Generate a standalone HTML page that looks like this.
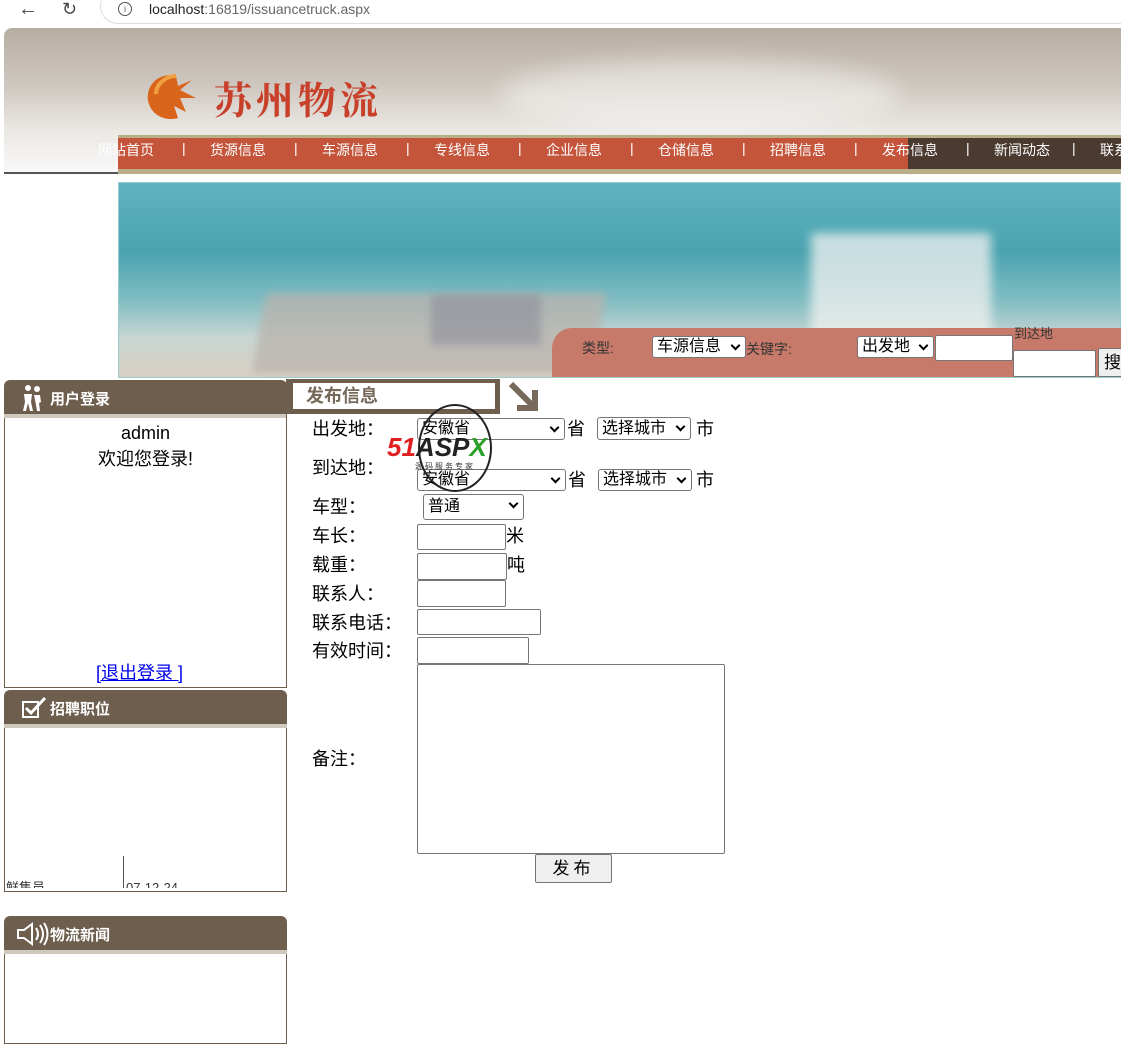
<!DOCTYPE html>
<html><head><meta charset="utf-8">
<style>
*{margin:0;padding:0;box-sizing:border-box}
body{width:1121px;height:1032px;overflow:hidden;background:#fff;position:relative;font-family:"Liberation Sans","Noto Sans CJK SC",sans-serif;color:#000}
.a{position:absolute}
.nav span{position:absolute;top:2px;color:#fff;font-size:14px;white-space:nowrap}
.lbl{position:absolute;left:312px;font-size:18px;line-height:20px;white-space:nowrap}
.box{position:absolute;border:1px solid #767676;border-radius:2px;background:#fff}
.sel{position:absolute;border:1px solid #767676;border-radius:3px;background:#fff;font-size:16px;line-height:18px;padding-left:4px;white-space:nowrap}
.sel:after{content:"";position:absolute;right:6px;top:5px;width:5px;height:5px;border-right:2px solid #000;border-bottom:2px solid #000;transform:rotate(45deg)}
.u{position:absolute;font-size:18px;line-height:20px}
.ph{position:absolute;left:4px;width:283px;height:38px;background:#6e5e4e;border-radius:6px 6px 0 0;border-bottom:4px solid #cfc8bd}
.ph b{position:absolute;left:46px;top:8px;color:#fff;font-size:15px}
.pb{position:absolute;left:4px;width:283px;border:1px solid #6e5e4e;border-top:none;background:#fff}
</style></head><body>
<div class="a" style="left:0;top:0;width:1121px;height:28px;background:#fff"></div>
<div class="a" style="left:18px;top:0;font-size:20px;line-height:18px;color:#444">&#8592;</div>
<div class="a" style="left:62px;top:0;font-size:18px;line-height:18px;color:#444">&#8635;</div>
<div class="a" style="left:100px;top:-12px;width:1100px;height:36px;border:1px solid #ddd;border-radius:18px"></div>
<div class="a" style="left:118px;top:2px;width:14px;height:14px;border:1px solid #555;border-radius:50%;font-size:9px;text-align:center;line-height:12px;color:#555">i</div>
<div class="a" style="left:149px;top:1px;font-size:14px;line-height:16px;color:#222">localhost<span style="color:#666">:16819/issuancetruck.aspx</span></div>
<div class="a" style="left:4px;top:28px;width:1117px;height:147px;border-radius:8px 0 0 0;background:linear-gradient(#b6aca2 0%,#cfc8c0 40%,#ebe8e4 70%,#fafafa 100%)"></div>
<div class="a" style="left:500px;top:60px;width:400px;height:70px;border-radius:50%;background:rgba(255,255,255,.45);filter:blur(12px)"></div>
<svg class="a" style="left:146px;top:68px" width="60" height="55" viewBox="0 0 60 55"><path d="M30 8 C12 4 0 18 2 32 C4 46 18 54 32 50 L28 38 L40 44 L34 30 L50 30 L34 22 L46 12 L32 18 Z" fill="#d9651c"/><path d="M30 8 C20 8 10 16 10 26" stroke="#f0a040" stroke-width="4" fill="none"/></svg>
<div class="a" style="left:214px;top:76px;font-size:38px;line-height:44px;color:#c8402a;font-weight:bold;font-family:'Noto Serif CJK SC',serif;letter-spacing:4px">苏州物流</div>
<div class="a" style="left:4px;top:172px;width:114px;height:2px;background:#555"></div>
<div class="a" style="left:118px;top:135px;width:1003px;height:39px;background:#b8ae88"></div>
<div class="a" style="left:118px;top:138px;width:790px;height:31px;background:#c4543a"></div>
<div class="a" style="left:908px;top:138px;width:213px;height:31px;background:#4a3a30"></div>
<div class="a nav" style="left:0;top:138px;width:1121px;height:31px">
<span style="left:98px">网站首页</span><span style="left:182px">|</span>
<span style="left:210px">货源信息</span><span style="left:294px">|</span>
<span style="left:322px">车源信息</span><span style="left:406px">|</span>
<span style="left:434px">专线信息</span><span style="left:518px">|</span>
<span style="left:546px">企业信息</span><span style="left:630px">|</span>
<span style="left:658px">仓储信息</span><span style="left:742px">|</span>
<span style="left:770px">招聘信息</span><span style="left:854px">|</span>
<span style="left:882px">发布信息</span><span style="left:966px">|</span>
<span style="left:994px">新闻动态</span><span style="left:1072px">|</span>
<span style="left:1100px">联系</span></div>
<div class="a" style="left:118px;top:182px;width:1003px;height:196px;background:linear-gradient(#5fb3bf 0%,#4aa3b0 35%,#7fbcc2 60%,#c9d6d2 80%,#d8cfc4 100%);border:1px solid #9cc;overflow:hidden">
<div class="a" style="left:140px;top:110px;width:340px;height:80px;background:#b9b3ad;transform:skewX(-10deg);opacity:.75;filter:blur(4px)"></div>
<div class="a" style="left:312px;top:112px;width:110px;height:50px;background:#8e8e9a;opacity:.6;filter:blur(4px)"></div>
<div class="a" style="left:692px;top:50px;width:180px;height:120px;background:#f2f2f0;opacity:.75;filter:blur(5px)"></div>
</div>
<div class="a" style="left:552px;top:328px;width:569px;height:49px;background:#c87a6a;border-radius:20px 0 0 0"></div>
<div class="a" style="left:582px;top:338px;font-size:14px;color:#333">类型:</div>
<div class="sel" style="left:652px;top:336px;width:94px;height:22px;line-height:20px">车源信息</div>
<div class="a" style="left:746px;top:339px;font-size:14px;color:#333">关键字:</div>
<div class="sel" style="left:857px;top:336px;width:77px;height:22px;line-height:20px">出发地</div>
<div class="box" style="left:935px;top:335px;width:78px;height:26px"></div>
<div class="a" style="left:1014px;top:323px;font-size:13px;color:#333">到达地</div>
<div class="box" style="left:1013px;top:350px;width:83px;height:27px"></div>
<div class="box" style="left:1098px;top:348px;width:30px;height:29px;background:#efefef;font-size:17px;padding-left:5px;line-height:27px">搜</div>
<div class="ph" style="top:380px"><b>用户登录</b>
<svg class="a" style="left:16px;top:4px" width="26" height="28"><circle cx="8" cy="4" r="3" fill="#fff"/><circle cx="17" cy="5" r="3" fill="#fff"/><path d="M4 10h8l-1 8 2 9h-3l-2-8-2 8H3l2-9zM14 11h6l1 7-2 1 1 8h-3l-1-6" fill="#fff"/></svg></div>
<div class="pb" style="top:418px;height:270px"></div>
<div class="a" style="left:4px;top:423px;width:283px;text-align:center;font-size:18px;line-height:20px">admin</div>
<div class="a" style="left:4px;top:449px;width:283px;text-align:center;font-size:18px;line-height:20px">欢迎您登录!</div>
<div class="a" style="left:4px;top:663px;width:271px;text-align:center;font-size:18px;line-height:20px;color:#00e;text-decoration:underline">[退出登录 ]</div>
<div class="ph" style="top:690px"><b>招聘职位</b>
<svg class="a" style="left:17px;top:6px" width="28" height="24"><rect x="2" y="6" width="15" height="15" fill="none" stroke="#fff" stroke-width="2"/><path d="M5 12l5 5L24 2" stroke="#fff" stroke-width="3" fill="none"/></svg></div>
<div class="pb" style="top:728px;height:164px"></div>
<div class="a" style="left:123px;top:856px;width:1px;height:32px;background:#555"></div>
<div class="a" style="left:6px;top:879px;font-size:13px;color:#333;height:9px;overflow:hidden;line-height:18px">鲜售员</div>
<div class="a" style="left:126px;top:879px;font-size:13px;color:#333;height:9px;overflow:hidden;line-height:18px">07-12-24</div>
<div class="ph" style="top:916px"><b>物流新闻</b>
<svg class="a" style="left:10px;top:4px" width="36" height="28"><path d="M4 10h6l8-6v20l-8-6H4z" fill="none" stroke="#fff" stroke-width="2"/><path d="M22 8q4 6 0 12M26 5q6 9 0 18M30 3q7 11 0 22" stroke="#fff" stroke-width="2" fill="none"/></svg></div>
<div class="pb" style="top:954px;height:90px"></div>
<div class="a" style="left:286px;top:379px;width:214px;height:35px;background:#6e5e4e"></div>
<div class="a" style="left:293px;top:383px;width:202px;height:26px;background:#fff"></div>
<div class="a" style="left:306px;top:384px;font-size:18px;font-weight:bold;color:#776a5a;line-height:24px">发布信息</div>
<svg class="a" style="left:505px;top:380px" width="36" height="34"><path d="M6 4l24 24M30 10v18H12" stroke="#776a5a" stroke-width="6" fill="none"/></svg>
<div class="a" style="left:286px;top:414px;width:1px;height:18px;background:#6e5e4e"></div>
<div class="lbl" style="top:419px">出发地：</div>
<div class="sel" style="left:417px;top:418px;width:148px;height:22px;line-height:20px">安徽省</div>
<div class="u" style="left:567px;top:419px">省</div>
<div class="sel" style="left:597px;top:417px;width:94px;height:23px;line-height:21px">选择城市</div>
<div class="u" style="left:696px;top:419px">市</div>
<div class="lbl" style="top:458px">到达地：</div>
<div class="sel" style="left:417px;top:469px;width:149px;height:22px;line-height:20px">安徽省</div>
<div class="u" style="left:568px;top:470px">省</div>
<div class="sel" style="left:598px;top:469px;width:94px;height:22px;line-height:20px">选择城市</div>
<div class="u" style="left:696px;top:470px">市</div>
<div class="lbl" style="top:497px">车型：</div>
<div class="sel" style="left:423px;top:494px;width:101px;height:26px;line-height:24px">普通</div>
<div class="lbl" style="top:526px">车长：</div>
<div class="box" style="left:417px;top:524px;width:89px;height:26px"></div>
<div class="u" style="left:506px;top:526px">米</div>
<div class="lbl" style="top:555px">载重：</div>
<div class="box" style="left:417px;top:553px;width:90px;height:27px"></div>
<div class="u" style="left:507px;top:555px">吨</div>
<div class="lbl" style="top:584px">联系人：</div>
<div class="box" style="left:417px;top:580px;width:89px;height:27px"></div>
<div class="lbl" style="top:613px">联系电话：</div>
<div class="box" style="left:417px;top:609px;width:124px;height:26px"></div>
<div class="lbl" style="top:641px">有效时间：</div>
<div class="box" style="left:417px;top:637px;width:112px;height:27px"></div>
<div class="box" style="left:417px;top:664px;width:308px;height:190px"></div>
<div class="lbl" style="top:749px">备注：</div>
<div class="box" style="left:535px;top:854px;width:77px;height:29px;background:#efefef;text-align:center;font-size:17px;line-height:27px;letter-spacing:4px">发布</div>
<div class="a" style="left:418px;top:404px;width:74px;height:88px;border:2px solid #222;border-radius:50%"></div>
<div class="a" style="left:387px;top:433px;font-size:26px;font-weight:bold;font-style:italic;line-height:28px;white-space:nowrap"><span style="color:#e02020">51</span><span style="color:#222">ASP</span><span style="color:#2aa02a">X</span></div>
<div class="a" style="left:415px;top:461px;font-size:8px;color:#333;letter-spacing:2px;white-space:nowrap">源码服务专家</div>
</body></html>
